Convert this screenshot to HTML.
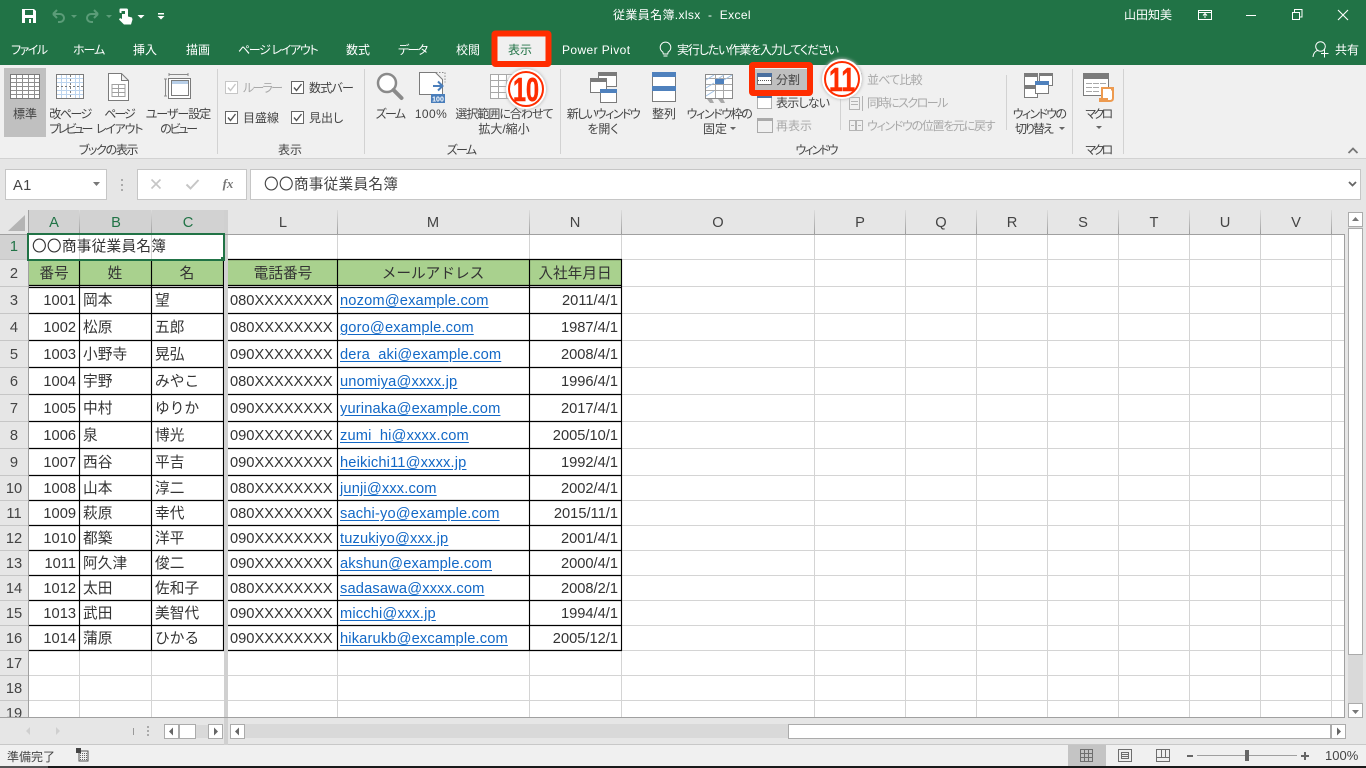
<!DOCTYPE html>
<html lang="ja"><head><meta charset="utf-8"><title>Excel</title>
<style>
html,body{margin:0;padding:0;width:1366px;height:768px;overflow:hidden;background:#f0f0f0}
body{position:relative;font-family:"Liberation Sans","Noto Sans CJK JP",sans-serif}
svg{position:absolute;left:0;top:0}
.t{position:absolute;white-space:nowrap;font-size:12px;line-height:16px;font-feature-settings:"palt";color:#444}
.c{transform:translateX(-50%)}
.w{color:#fff}
.g{color:#a9a9a9}
.k{position:absolute;white-space:nowrap;font-size:14.67px;line-height:20px;color:#333;margin-top:1px}
.j{letter-spacing:.1px}
.r{text-align:right}
.m{position:absolute;white-space:nowrap;font-size:14.67px;line-height:20px;color:#1268c6;text-decoration:underline;text-underline-offset:2px;letter-spacing:.15px;left:340px;margin-top:1px}
.h{position:absolute;font-size:14.67px;line-height:20px;color:#444;transform:translateX(-50%);white-space:nowrap;margin-top:1px}
.s{color:#217346}
</style></head><body>
<svg width="1366" height="768" viewBox="0 0 1366 768">
<rect width="1366" height="65" fill="#217346"/>
<rect y="65" width="1366" height="93" fill="#f0f0f0"/>
<rect y="158" width="1366" height="52" fill="#e6e6e6"/>
<rect y="158" width="1366" height="1" fill="#d2d2d2"/>
<rect y="210" width="1366" height="535" fill="#e6e6e6"/>
<rect y="745" width="1366" height="22" fill="#f0f0f0"/>
<rect y="744" width="1366" height="1" fill="#c8c8c8"/>
<rect x="48" y="766" width="1318" height="2" fill="#1a1a1a"/><rect y="766" width="48" height="2" fill="#555"/>
<!-- QAT -->
<path d="M22 9h12l2 2v12H22z" fill="#fff"/><rect x="25" y="10" width="8" height="5" fill="#217346"/><rect x="25" y="18" width="8" height="5" fill="#217346"/><rect x="29" y="19" width="2" height="4" fill="#fff"/>
<g fill="none" stroke="#5b9c78" stroke-width="2"><path d="M53 14l4-4M53 14l4 4M53 14h7a4 4 0 0 1 0 8h-2"/><path d="M98 14l-4-4M98 14l-4 4M98 14h-7a4 4 0 0 0 0 8h2"/></g>
<path d="M71 15h6l-3 3zM106 15h6l-3 3z" fill="#5b9c78"/>
<path d="M120 8.500h6.500a1.500 1.500 0 0 1 1.500 1.500v6.500l4 1 .5 2 -1.500 5h-7l-5-5 1-1.500 2 1v-6h-1.500a1 1 0 0 1-1-1V9.500a1 1 0 0 1 1-1z" fill="#fff"/><rect x="121.500" y="11" width="3.500" height="3" fill="#217346"/>
<path d="M137.500 15h7l-3.500 3.500zM157.500 16h7l-3.500 3.500z" fill="#fff"/><rect x="158" y="13" width="6" height="1.500" fill="#fff"/>
<!-- window controls -->
<g fill="none" stroke="#fff"><path d="M1198.500 10.500h13v9h-13zM1198.500 12.500h13M1205 18v-4M1203 15.500l2-2 2 2"/><path d="M1246 15.500h10"/><path d="M1292.500 12.500h7v7h-7zM1294.500 12v-2.500h7.500v7.500h-2.500"/><path d="M1338 10l10 10M1348 10l-10 10" stroke-width="1.100"/>
<circle cx="1320.500" cy="46.500" r="4.800"/><path d="M1313 57c.5-4.500 3-6.500 5.500-6.800M1321 53.500h7.500M1324.500 49.500v8"/></g>
<path d="M662.800 52a5.300 5.300 0 1 1 5.400 0l-.5 2h-4.400zM663.500 56h4" fill="none" stroke="#fff"/>
<!-- ribbon selected -->
<rect x="4" y="68" width="42" height="69" fill="#c0c0c0"/>
<g fill="none" stroke="#d2d2d2"><path d="M217.500 69v85M364.500 69v85M560.500 69v85M1072.500 69v85M1123.500 69v85M840.500 87v43M1006.500 75v55"/></g>
<!-- 標準 -->
<g shape-rendering="crispEdges" fill="none"><rect x="10.500" y="74.500" width="29" height="24" fill="#fff" stroke="#7b7b7b"/><path d="M11 78.500h28M11 82.500h28M11 86.500h28M11 90.500h28M11 94.500h28M16.500 75v23M22.500 75v23M28.500 75v23M34.500 75v23" stroke="#8f8f8f"/></g>
<!-- 改ページ -->
<g shape-rendering="crispEdges" fill="none"><rect x="56.500" y="74.500" width="27" height="24" fill="#fff" stroke="#7b7b7b"/><path d="M57 78.500h26M57 82.500h26M57 90.500h26M57 94.500h26M61.500 75v23M66.500 75v23M75.500 75v23M79.500 75v23" stroke="#bcd4ee"/><path d="M57 86.500h26M70.500 75v23" stroke="#7b7b7b" stroke-dasharray="2 2"/></g>
<!-- page layout -->
<path d="M108.500 73.500h13l7 7v20h-20zM121.500 73.500v7h7" fill="#fff" stroke="#7b7b7b"/><g shape-rendering="crispEdges"><path d="M112 84.500h13M112 88.500h13M112 92.500h13M112 96.500h13M112 84v13M118.500 84v13M125 84v13" stroke="#a0a0a0" fill="none"/></g>
<!-- custom view -->
<g fill="none" shape-rendering="crispEdges"><rect x="168.500" y="78.500" width="22" height="20" fill="#fff" stroke="#7b7b7b"/><rect x="171.500" y="80.500" width="17" height="15" stroke="#7b7b7b"/><rect x="172" y="81" width="16" height="3" fill="#b8cfe8"/><path d="M169 74.500h19M169 73v3M188 73v3M165.500 79v17M164 79h3M164 96h3" stroke="#8a8a8a"/></g>
<!-- checkboxes -->
<g fill="#fff" stroke="#666"><rect x="291.500" y="81.500" width="12" height="12"/><rect x="225.500" y="111.500" width="12" height="12"/><rect x="291.500" y="111.500" width="12" height="12"/></g>
<rect x="225.500" y="81.500" width="12" height="12" fill="#fff" stroke="#c6c6c6"/>
<g fill="none" stroke="#555" stroke-width="1.400"><path d="M294 87.500l2.500 3 5-6.500M228 117.500l2.500 3 5-6.500M294 117.500l2.500 3 5-6.500"/></g>
<path d="M228 87.500l2.500 3 5-6.500" fill="none" stroke="#c6c6c6" stroke-width="1.400"/>
<!-- zoom -->
<circle cx="387" cy="83" r="9" fill="#fff" stroke="#8a8a8a" stroke-width="2.500"/><path d="M393.500 90l8 8" stroke="#8a8a8a" stroke-width="4" stroke-linecap="round"/>
<!-- 100 -->
<path d="M419.500 72.500h16l7 7v15h-23z" fill="#fff" stroke="#7b7b7b"/><path d="M436 72.500h9v10" fill="none" stroke="#8a8a8a" stroke-dasharray="1.500 1.500"/>
<path d="M433 86h9M438 81.500l4.500 4.500-4.500 4.500" fill="none" stroke="#4a7ebb" stroke-width="2"/><rect x="431" y="94" width="14" height="9" fill="#4a7ebb"/>
<text x="438" y="101.500" font-size="7" font-weight="bold" fill="#fff" text-anchor="middle" font-family="Liberation Sans">100</text>
<!-- fit selection -->
<g shape-rendering="crispEdges" fill="none" stroke="#a8a8a8"><rect x="490.500" y="74.500" width="24" height="24" fill="#fff"/><path d="M491 80.500h24M491 86.500h24M491 92.500h24M498.500 75v24M506.500 75v24"/></g>
<!-- new window -->
<g shape-rendering="crispEdges"><rect x="598.500" y="72.500" width="18" height="14" fill="#fff" stroke="#7b7b7b"/><rect x="598" y="72" width="19" height="4" fill="#7b7b7b"/><rect x="590.500" y="78.500" width="16" height="14" fill="#fff" stroke="#7b7b7b"/><rect x="590" y="78" width="17" height="4" fill="#7b7b7b"/><rect x="600.500" y="89.500" width="16" height="13" fill="#fff" stroke="#7b7b7b"/><rect x="600" y="89" width="17" height="4" fill="#4f81bd"/></g>
<!-- arrange -->
<g shape-rendering="crispEdges"><rect x="652.500" y="72.500" width="23" height="29" fill="#fff" stroke="#7b7b7b"/><rect x="652" y="72" width="24" height="5" fill="#4f81bd"/><rect x="652" y="86" width="24" height="5" fill="#4f81bd"/></g>
<!-- freeze -->
<g fill="none"><rect x="705.500" y="74.500" width="27" height="24" fill="#fff" stroke="#8a8a8a" shape-rendering="crispEdges"/><path d="M706 78.500h26M706 84.500h26M706 90.500h26M715.500 75v23M723.500 75v23" stroke="#a8a8a8" shape-rendering="crispEdges"/><path d="M706 80l8-5M716 80l8-5M724 80l8-5M706 88l8-5M706 96l8-5" stroke="#9ec0e4"/></g><rect x="715" y="79" width="9" height="5" fill="#4f81bd"/><path d="M707 99l3 4h4l-2-4M718 99l3 4h4l-2-4" fill="#a8a8a8"/>
<!-- hide/unhide -->
<rect x="755" y="69" width="52" height="21" fill="#c0c0c0"/>
<g shape-rendering="crispEdges"><rect x="757.500" y="73.500" width="14" height="11" fill="#fff" stroke="#6f6f6f"/><rect x="757" y="73" width="15" height="4" fill="#4a6f9f"/><path d="M758 80.500h13" stroke="#555" stroke-dasharray="1 1"/><rect x="757.500" y="93.500" width="14" height="15" fill="#fff" stroke="#666" stroke-dasharray="1 1"/><rect x="757" y="93" width="15" height="5" fill="#4a6f9f"/><rect x="757.500" y="118.500" width="15" height="14" fill="none" stroke="#aaa"/><rect x="757" y="118" width="16" height="3" fill="#aaa"/></g>
<g fill="none" stroke="#b4b4b4" shape-rendering="crispEdges"><rect x="849.500" y="75.500" width="8" height="9" /><rect x="853.500" y="73.500" width="8" height="10" fill="#f0f0f0"/><rect x="849.500" y="97.500" width="10" height="12"/><path d="M851 101.500h7M851 104.500h7M862.500 96v15"/><rect x="849.500" y="120.500" width="6" height="10"/><rect x="856.500" y="120.500" width="6" height="10"/><path d="M851 125.500h3M858 125.500h3"/></g>
<!-- switch -->
<g shape-rendering="crispEdges"><rect x="1024.500" y="73.500" width="13" height="12" fill="#fff" stroke="#7b7b7b"/><rect x="1024" y="73" width="14" height="4" fill="#7b7b7b"/><rect x="1039.500" y="73.500" width="13" height="12" fill="#fff" stroke="#7b7b7b"/><rect x="1039" y="73" width="14" height="3" fill="#7b7b7b"/><rect x="1024.500" y="86.500" width="13" height="11" fill="#fff" stroke="#7b7b7b"/><rect x="1024" y="86" width="14" height="3" fill="#7b7b7b"/><rect x="1035.500" y="81.500" width="13" height="12" fill="#fff" stroke="#7b7b7b"/><rect x="1035" y="81" width="14" height="4" fill="#4f81bd"/></g>
<!-- macro -->
<g shape-rendering="crispEdges"><rect x="1083.500" y="73.500" width="25" height="22" fill="#fff" stroke="#7b7b7b"/><rect x="1083" y="73" width="26" height="6" fill="#7b7b7b"/><path d="M1086 83.500h21M1086 87.500h14M1086 91.500h14" stroke="#a8a8a8" stroke-dasharray="6 1"/></g>
<path d="M1102 88h11v10c0 2-1 3-3 3h-11c2 0 3-1 3-3z" fill="#fff" stroke="#ed9a4f" stroke-width="2"/><path d="M1111 87.500h3v3h-3z" fill="#ed9a4f"/><path d="M1099 98h9v3h-9z" fill="#ed9a4f"/>
<path d="M1096 126h6l-3 3zM730 127h6l-3 3zM1059 127h6l-3 3z" fill="#666"/>
<path d="M1348.500 153l4.500-4.500 4.500 4.500" fill="none" stroke="#777" stroke-width="1.800"/>
<!-- formula bar -->
<g fill="#fff" stroke="#c6c6c6" shape-rendering="crispEdges"><rect x="5.500" y="169.500" width="101" height="30"/><rect x="137.500" y="169.500" width="109" height="30"/><rect x="250.500" y="169.500" width="1110" height="30"/></g>
<path d="M93 182h7l-3.500 4z" fill="#777"/>
<path d="M121 179h2v2h-2zM121 184h2v2h-2zM121 189h2v2h-2z" fill="#aaa"/>
<path d="M151.500 179.500l9 9M160.500 179.500l-9 9" stroke="#c6c6c6" stroke-width="1.600" fill="none"/>
<path d="M186.500 184.500l4 4 8-8.500" stroke="#c6c6c6" stroke-width="2" fill="none"/>
<path d="M1349 182l3.500 3.500 3.500-3.500" stroke="#666" stroke-width="1.800" fill="none"/>
<!-- sheet -->
<rect x="29" y="235" width="1315" height="482" fill="#fff"/>
<rect x="29" y="210" width="195" height="24" fill="#d2d2d2"/>
<rect x="0" y="235" width="28" height="24" fill="#d2d2d2"/>
<path d="M25 215v16H8z" fill="#b4b4b4"/>
<defs><linearGradient id="hg" x1="0" y1="0" x2="0" y2="1"><stop offset="0" stop-color="#dcdcdc"/><stop offset="1" stop-color="#9d9d9d"/></linearGradient></defs>
<g fill="url(#hg)"><rect x="79" y="210" width="1" height="24"/><rect x="151" y="210" width="1" height="24"/><rect x="337" y="210" width="1" height="24"/><rect x="529" y="210" width="1" height="24"/><rect x="621" y="210" width="1" height="24"/><rect x="814" y="210" width="1" height="24"/><rect x="905" y="210" width="1" height="24"/><rect x="976" y="210" width="1" height="24"/><rect x="1047" y="210" width="1" height="24"/><rect x="1118" y="210" width="1" height="24"/><rect x="1189" y="210" width="1" height="24"/><rect x="1260" y="210" width="1" height="24"/><rect x="1331" y="210" width="1" height="24"/></g>
<path d="M0 259.500h28M0 286.500h28M0 313.500h28M0 340.500h28M0 367.500h28M0 394.500h28M0 421.500h28M0 448.500h28M0 475.500h28M0 500.500h28M0 525.500h28M0 550.500h28M0 575.500h28M0 600.500h28M0 625.500h28M0 650.500h28M0 675.500h28M0 700.500h28" stroke="#c6c6c6" shape-rendering="crispEdges" fill="none"/>
<g fill="none" stroke="#d4d4d4" shape-rendering="crispEdges"><path d="M79.500 234v483M151.500 234v483M337.500 234v483M529.500 234v483M621.500 234v483M814.500 234v483M905.500 234v483M976.500 234v483M1047.500 234v483M1118.500 234v483M1189.500 234v483M1260.500 234v483M1331.500 234v483"/><path d="M29 259.500h1315M29 286.500h1315M29 313.500h1315M29 340.500h1315M29 367.500h1315M29 394.500h1315M29 421.500h1315M29 448.500h1315M29 475.500h1315M29 500.500h1315M29 525.500h1315M29 550.500h1315M29 575.500h1315M29 600.500h1315M29 625.500h1315M29 650.500h1315M29 675.500h1315M29 700.500h1315"/></g>
<rect x="29" y="260" width="195" height="25" fill="#a9d18e"/><rect x="228" y="260" width="394" height="25" fill="#a9d18e"/>
<rect x="29" y="286" width="195" height="1" fill="#fff"/><rect x="228" y="286" width="394" height="1" fill="#fff"/>
<g fill="none" stroke="#000" stroke-width="1.150"><path d="M79.500 259v392M151.500 259v392M223.500 259v392M337.500 259v392M529.500 259v392M621.500 259v392"/><path d="M29 285.500h195M29 287.500h195M29 313.500h195M29 340.500h195M29 367.500h195M29 394.500h195M29 421.500h195M29 448.500h195M29 475.500h195M29 500.500h195M29 525.500h195M29 550.500h195M29 575.500h195M29 600.500h195M29 625.500h195M29 650.500h195"/><path d="M228 259.500h394M228 285.500h394M228 287.500h394M228 313.500h394M228 340.500h394M228 367.500h394M228 394.500h394M228 421.500h394M228 448.500h394M228 475.500h394M228 500.500h394M228 525.500h394M228 550.500h394M228 575.500h394M228 600.500h394M228 625.500h394M228 650.500h394"/></g>
<rect x="224" y="210" width="4" height="535" fill="#d0d0d0"/>
<rect x="28" y="210" width="1" height="507" fill="#a0a0a0"/><rect x="0" y="234" width="1344" height="1" fill="#a0a0a0"/>
<rect x="1344" y="234" width="1" height="484" fill="#a0a0a0"/><rect x="0" y="717" width="1345" height="1" fill="#a0a0a0"/>
<rect x="28" y="234" width="196" height="26" fill="none" stroke="#217346" stroke-width="2"/>
<rect x="221" y="257" width="4" height="4" fill="#217346"/>
<!-- v scroll -->
<rect x="1348" y="212" width="15" height="505" fill="#d9d9d9"/>
<g fill="#fff" stroke="#ababab" shape-rendering="crispEdges"><rect x="1348.500" y="212.500" width="14" height="14"/><rect x="1348.500" y="228.500" width="14" height="426"/><rect x="1348.500" y="703.500" width="14" height="14"/></g>
<path d="M1355.500 217l3.500 4h-7zM1352 710h7l-3.500 4z" fill="#777"/>
<!-- h scroll -->
<rect x="245" y="724" width="544" height="14" fill="#d9d9d9"/><rect x="196" y="725" width="13" height="13" fill="#d9d9d9"/>
<g fill="#fff" stroke="#ababab" shape-rendering="crispEdges"><rect x="164.500" y="724.500" width="14" height="14"/><rect x="179.500" y="724.500" width="16" height="14"/><rect x="208.500" y="724.500" width="14" height="14"/><rect x="230.500" y="724.500" width="14" height="14"/><rect x="788.500" y="724.500" width="542" height="14"/><rect x="1331.500" y="724.500" width="14" height="14"/></g>
<path d="M169 731.500l4-4v8zM218 731.500l-4-4v8zM235 731.500l4-4v8zM1341 731.500l-4-4v8z" fill="#666"/>
<path d="M26 731l4-4v8zM60 731l-4-4v8z" fill="#cfcfcf"/>
<rect x="133" y="728" width="1" height="7" fill="#999"/><path d="M147 726h2v2h-2zM147 730h2v2h-2zM147 734h2v2h-2z" fill="#aaa"/>
<!-- status -->
<g shape-rendering="crispEdges"><rect x="79" y="751" width="9" height="10" fill="none" stroke="#555"/><path d="M80 753.500h8M80 755.500h8M80 757.500h8M80 759.500h8" stroke="#666" stroke-dasharray="1 1"/><rect x="76" y="748" width="5" height="5" fill="#444"/></g>
<rect x="1068" y="745" width="38" height="21" fill="#c4c4c4"/>
<g fill="none" stroke="#6e6e6e" shape-rendering="crispEdges"><path d="M1080.500 749.500h12v12h-12zM1080.500 753.500h12M1080.500 757.500h12M1084.500 749.500v12M1088.500 749.500v12"/><path d="M1118.500 749.500h13v12h-13zM1121.500 752.500h7v6h-7zM1122 754.500h6M1122 756.500h6"/><path d="M1156.500 749.500h13v12h-13zM1156.500 757.500h13M1161.500 749.500v8M1165.500 749.500v8"/></g>
<rect x="1187" y="755" width="6" height="2" fill="#666"/><rect x="1197" y="755" width="100" height="1" fill="#a0a0a0"/><rect x="1245" y="750" width="4" height="11" fill="#666"/><path d="M1301 756h8M1305 752v8" stroke="#666" stroke-width="2"/>
</svg>

<div class="t w" style="left:613px;top:7px;letter-spacing:.36px">従業員名簿.xlsx&nbsp; -&nbsp; Excel</div>
<div class="t w" style="left:1124px;top:7px">山田知美</div>
<div class="t w" style="left:11px;top:42px;letter-spacing:-1.5px">ファイル</div>
<div class="t w" style="left:73px;top:42px;letter-spacing:-1px">ホーム</div>
<div class="t w" style="left:133px;top:42px">挿入</div>
<div class="t w" style="left:186px;top:42px">描画</div>
<div class="t w" style="left:238px;top:42px;letter-spacing:-1.33px">ページ レイアウト</div>
<div class="t w" style="left:346px;top:42px">数式</div>
<div class="t w" style="left:398px;top:42px;letter-spacing:-1.67px">データ</div>
<div class="t w" style="left:456px;top:42px">校閲</div>
<div class="t w" style="left:562px;top:42px;letter-spacing:.4px">Power Pivot</div>
<div class="t w" style="left:677px;top:42px;letter-spacing:-1.12px">実行したい作業を入力してください</div>
<div class="t w" style="left:1335px;top:42px">共有</div>

<div class="t c" style="left:25px;top:106px">標準</div>
<div class="t c" style="left:70px;top:106px;letter-spacing:-1.5px">改ページ</div><div class="t c" style="left:70px;top:121px;letter-spacing:-2.6px">プレビュー</div>
<div class="t c" style="left:119px;top:106px;letter-spacing:-2px">ページ</div><div class="t c" style="left:119px;top:121px;letter-spacing:-1.2px">レイアウト</div>
<div class="t c" style="left:178px;top:106px;letter-spacing:-1px">ユーザー設定</div><div class="t c" style="left:178px;top:121px;letter-spacing:-2.2px">のビュー</div>
<div class="t c" style="left:108px;top:142px;letter-spacing:-1.3px">ブックの表示</div>
<div class="t g" style="left:243px;top:80px;letter-spacing:-1.75px">ルーラー</div>
<div class="t" style="left:309px;top:80px;letter-spacing:-.75px">数式バー</div>
<div class="t" style="left:243px;top:110px">目盛線</div>
<div class="t" style="left:309px;top:110px">見出し</div>
<div class="t c" style="left:290px;top:142px">表示</div>
<div class="t c" style="left:390px;top:106px;letter-spacing:-1.67px">ズーム</div>
<div class="t c" style="left:431px;top:106px;letter-spacing:.4px">100%</div>
<div class="t c" style="left:504px;top:106px;letter-spacing:-1px">選択範囲に合わせて</div>
<div class="t c" style="left:504px;top:121px">拡大/縮小</div>
<div class="t c" style="left:461px;top:142px;letter-spacing:-1.67px">ズーム</div>
<div class="t c" style="left:603px;top:106px;letter-spacing:-1.5px">新しいウィンドウ</div><div class="t c" style="left:603px;top:121px">を開く</div>
<div class="t c" style="left:664px;top:106px">整列</div>
<div class="t c" style="left:719px;top:106px;letter-spacing:-1.4px">ウィンドウ枠の</div><div class="t" style="left:703px;top:121px">固定</div>
<div class="t" style="left:776px;top:95px;letter-spacing:-.8px">表示しない</div>
<div class="t g" style="left:776px;top:118px">再表示</div>
<div class="t g" style="left:867px;top:72px;letter-spacing:-.8px">並べて比較</div>
<div class="t g" style="left:867px;top:95px;letter-spacing:-1.5px">同時にスクロール</div>
<div class="t g" style="left:867px;top:118px;letter-spacing:-1.3px">ウィンドウの位置を元に戻す</div>
<div class="t c" style="left:816px;top:142px;letter-spacing:-2px">ウィンドウ</div>
<div class="t c" style="left:1039px;top:106px;letter-spacing:-1.67px">ウィンドウの</div><div class="t" style="left:1015px;top:121px;letter-spacing:-2px">切り替え</div>
<div class="t c" style="left:1098px;top:106px;letter-spacing:-2.6px">マクロ</div><div class="t c" style="left:1098px;top:142px;letter-spacing:-2.6px">マクロ</div>
<div class="t" style="left:7px;top:749px">準備完了</div>
<div class="t" style="left:1325px;top:748px;font-size:13px">100%</div>

<div class="t" style="left:13px;top:178px;font-size:14.67px;letter-spacing:.4px">A1</div>
<div class="t" style="left:227px;top:176px;font-family:'Liberation Serif',serif;font-style:italic;font-weight:bold;font-size:13px;color:#777;transform:translateX(-50%);margin-left:1px">fx</div>
<div class="k" style="left:264px;top:174px;letter-spacing:.25px;color:#444">〇〇商事従業員名簿</div>

<div class="h s" style="left:54px;top:212px">A</div><div class="h s" style="left:116px;top:212px">B</div><div class="h s" style="left:188px;top:212px">C</div>
<div class="h" style="left:283px;top:212px">L</div><div class="h" style="left:433px;top:212px">M</div><div class="h" style="left:575px;top:212px">N</div><div class="h" style="left:718px;top:212px">O</div><div class="h" style="left:860px;top:212px">P</div><div class="h" style="left:941px;top:212px">Q</div><div class="h" style="left:1012px;top:212px">R</div><div class="h" style="left:1083px;top:212px">S</div><div class="h" style="left:1154px;top:212px">T</div><div class="h" style="left:1225px;top:212px">U</div><div class="h" style="left:1296px;top:212px">V</div>
<div class="h s" style="left:14px;top:236px">1</div><div class="h" style="left:14px;top:263px">2</div><div class="h" style="left:14px;top:290px">3</div><div class="h" style="left:14px;top:317px">4</div><div class="h" style="left:14px;top:344px">5</div><div class="h" style="left:14px;top:371px">6</div><div class="h" style="left:14px;top:398px">7</div><div class="h" style="left:14px;top:425px">8</div><div class="h" style="left:14px;top:452px">9</div><div class="h" style="left:14px;top:478px">10</div><div class="h" style="left:14px;top:503px">11</div><div class="h" style="left:14px;top:528px">12</div><div class="h" style="left:14px;top:553px">13</div><div class="h" style="left:14px;top:578px">14</div><div class="h" style="left:14px;top:603px">15</div><div class="h" style="left:14px;top:628px">16</div><div class="h" style="left:14px;top:653px">17</div><div class="h" style="left:14px;top:678px">18</div><div class="h" style="left:14px;top:703px;height:13px;overflow:hidden">19</div>

<div class="k" style="left:32px;top:236px;letter-spacing:.25px">〇〇商事従業員名簿</div>
<div class="h" style="left:54px;top:263px;color:#333">番号</div><div class="h" style="left:115px;top:263px;color:#333">姓</div><div class="h" style="left:187px;top:263px;color:#333">名</div><div class="h" style="left:283px;top:263px;color:#333">電話番号</div><div class="h" style="left:433px;top:263px;color:#333">メールアドレス</div><div class="h" style="left:575px;top:263px;color:#333">入社年月日</div>

<div class="k r" style="right:1290px;top:290px">1001</div><div class="k j" style="left:83px;top:290px">岡本</div><div class="k j" style="left:155px;top:290px">望</div><div class="k" style="left:230px;top:290px">080XXXXXXXX</div><a class="m" style="top:290px">nozom@example.com</a><div class="k r" style="right:748px;top:290px">2011/4/1</div>
<div class="k r" style="right:1290px;top:317px">1002</div><div class="k j" style="left:83px;top:317px">松原</div><div class="k j" style="left:155px;top:317px">五郎</div><div class="k" style="left:230px;top:317px">080XXXXXXXX</div><a class="m" style="top:317px">goro@example.com</a><div class="k r" style="right:748px;top:317px">1987/4/1</div>
<div class="k r" style="right:1290px;top:344px">1003</div><div class="k j" style="left:83px;top:344px">小野寺</div><div class="k j" style="left:155px;top:344px">晃弘</div><div class="k" style="left:230px;top:344px">090XXXXXXXX</div><a class="m" style="top:344px">dera_aki@example.com</a><div class="k r" style="right:748px;top:344px">2008/4/1</div>
<div class="k r" style="right:1290px;top:371px">1004</div><div class="k j" style="left:83px;top:371px">宇野</div><div class="k j" style="left:155px;top:371px">みやこ</div><div class="k" style="left:230px;top:371px">080XXXXXXXX</div><a class="m" style="top:371px">unomiya@xxxx.jp</a><div class="k r" style="right:748px;top:371px">1996/4/1</div>
<div class="k r" style="right:1290px;top:398px">1005</div><div class="k j" style="left:83px;top:398px">中村</div><div class="k j" style="left:155px;top:398px">ゆりか</div><div class="k" style="left:230px;top:398px">090XXXXXXXX</div><a class="m" style="top:398px">yurinaka@example.com</a><div class="k r" style="right:748px;top:398px">2017/4/1</div>
<div class="k r" style="right:1290px;top:425px">1006</div><div class="k j" style="left:83px;top:425px">泉</div><div class="k j" style="left:155px;top:425px">博光</div><div class="k" style="left:230px;top:425px">090XXXXXXXX</div><a class="m" style="top:425px">zumi_hi@xxxx.com</a><div class="k r" style="right:748px;top:425px">2005/10/1</div>
<div class="k r" style="right:1290px;top:452px">1007</div><div class="k j" style="left:83px;top:452px">西谷</div><div class="k j" style="left:155px;top:452px">平吉</div><div class="k" style="left:230px;top:452px">090XXXXXXXX</div><a class="m" style="top:452px">heikichi11@xxxx.jp</a><div class="k r" style="right:748px;top:452px">1992/4/1</div>
<div class="k r" style="right:1290px;top:478px">1008</div><div class="k j" style="left:83px;top:478px">山本</div><div class="k j" style="left:155px;top:478px">淳二</div><div class="k" style="left:230px;top:478px">080XXXXXXXX</div><a class="m" style="top:478px">junji@xxx.com</a><div class="k r" style="right:748px;top:478px">2002/4/1</div>
<div class="k r" style="right:1290px;top:503px">1009</div><div class="k j" style="left:83px;top:503px">萩原</div><div class="k j" style="left:155px;top:503px">幸代</div><div class="k" style="left:230px;top:503px">080XXXXXXXX</div><a class="m" style="top:503px">sachi-yo@example.com</a><div class="k r" style="right:748px;top:503px">2015/11/1</div>
<div class="k r" style="right:1290px;top:528px">1010</div><div class="k j" style="left:83px;top:528px">都築</div><div class="k j" style="left:155px;top:528px">洋平</div><div class="k" style="left:230px;top:528px">090XXXXXXXX</div><a class="m" style="top:528px">tuzukiyo@xxx.jp</a><div class="k r" style="right:748px;top:528px">2001/4/1</div>
<div class="k r" style="right:1290px;top:553px">1011</div><div class="k j" style="left:83px;top:553px">阿久津</div><div class="k j" style="left:155px;top:553px">俊二</div><div class="k" style="left:230px;top:553px">090XXXXXXXX</div><a class="m" style="top:553px">akshun@example.com</a><div class="k r" style="right:748px;top:553px">2000/4/1</div>
<div class="k r" style="right:1290px;top:578px">1012</div><div class="k j" style="left:83px;top:578px">太田</div><div class="k j" style="left:155px;top:578px">佐和子</div><div class="k" style="left:230px;top:578px">080XXXXXXXX</div><a class="m" style="top:578px">sadasawa@xxxx.com</a><div class="k r" style="right:748px;top:578px">2008/2/1</div>
<div class="k r" style="right:1290px;top:603px">1013</div><div class="k j" style="left:83px;top:603px">武田</div><div class="k j" style="left:155px;top:603px">美智代</div><div class="k" style="left:230px;top:603px">090XXXXXXXX</div><a class="m" style="top:603px">micchi@xxx.jp</a><div class="k r" style="right:748px;top:603px">1994/4/1</div>
<div class="k r" style="right:1290px;top:628px">1014</div><div class="k j" style="left:83px;top:628px">蒲原</div><div class="k j" style="left:155px;top:628px">ひかる</div><div class="k" style="left:230px;top:628px">090XXXXXXXX</div><a class="m" style="top:628px">hikarukb@excample.com</a><div class="k r" style="right:748px;top:628px">2005/12/1</div>

<svg width="1366" height="768" viewBox="0 0 1366 768" style="pointer-events:none">
<defs><filter id="sh" x="-30%" y="-30%" width="160%" height="160%"><feGaussianBlur stdDeviation="1.500"/></filter></defs>
<rect x="494.500" y="33.500" width="54" height="30.500" fill="#f0f0f0" stroke="#ff2d00" stroke-width="6" rx="1"/>
<rect x="752" y="65" width="58" height="28" fill="none" stroke="#ff2d00" stroke-width="6" rx="1"/>
<circle cx="526" cy="89" r="20.500" fill="#bbb" filter="url(#sh)"/><circle cx="526" cy="89" r="20" fill="#fff"/>
<circle cx="526" cy="89" r="17" fill="#fff" stroke="#ff2d00" stroke-width="2"/>
<text x="526" y="101" font-family="Liberation Sans" font-weight="bold" font-size="33" fill="#ff2d00" stroke="#ff2d00" stroke-width=".6" text-anchor="middle" textLength="26" lengthAdjust="spacingAndGlyphs">10</text>
<circle cx="842" cy="79" r="20.500" fill="#bbb" filter="url(#sh)"/><circle cx="842" cy="79" r="20" fill="#fff"/>
<circle cx="842" cy="79" r="17" fill="#fff" stroke="#ff2d00" stroke-width="2"/>
<text x="842" y="91" font-family="Liberation Sans" font-weight="bold" font-size="33" fill="#ff2d00" stroke="#ff2d00" stroke-width=".6" text-anchor="middle" textLength="26" lengthAdjust="spacingAndGlyphs">11</text>
</svg>
<div class="t" style="left:508px;top:42px;color:#217346;z-index:3">表示</div>
<div class="t" style="left:776px;top:72px;z-index:3">分割</div>
</body></html>
